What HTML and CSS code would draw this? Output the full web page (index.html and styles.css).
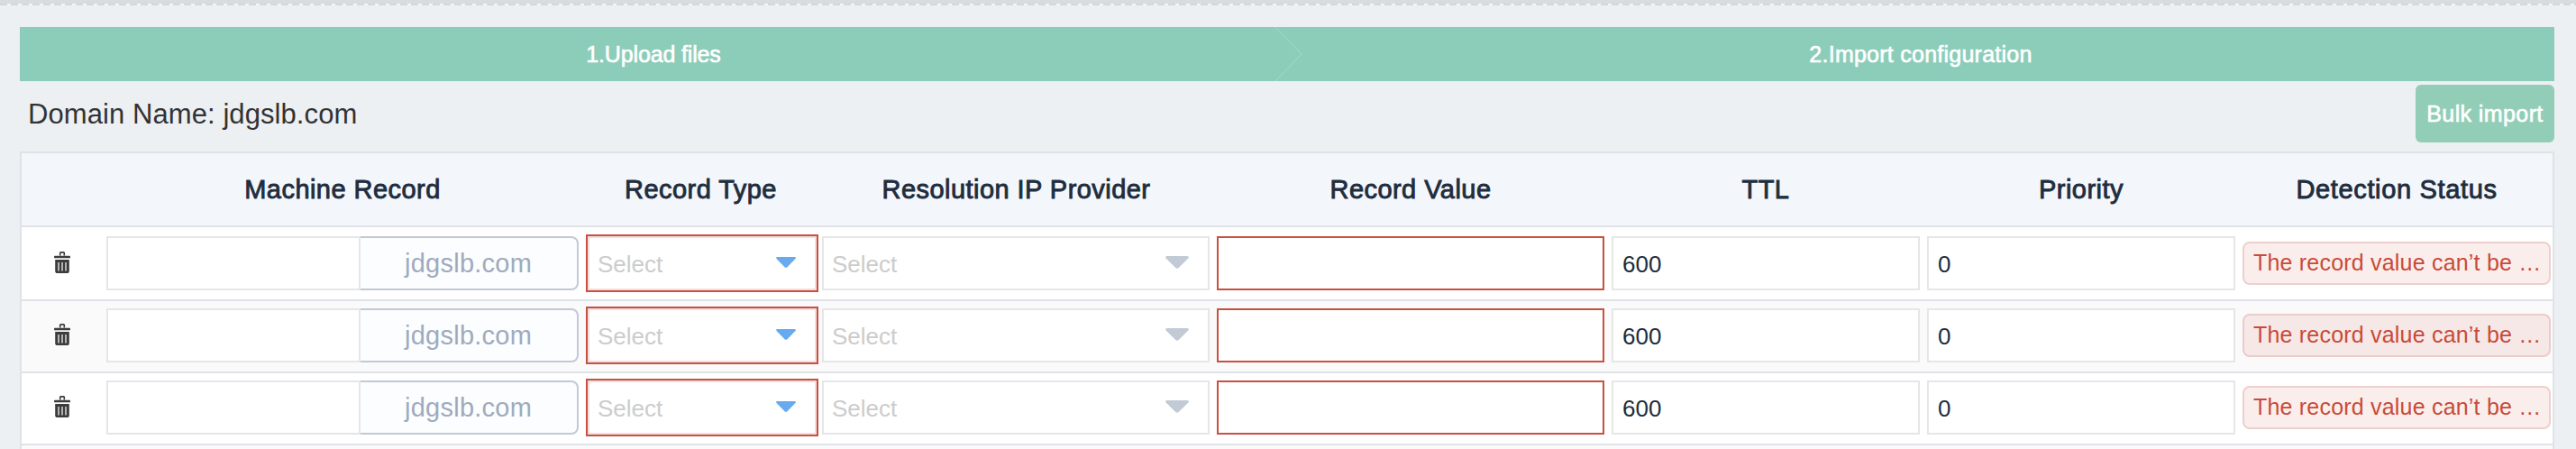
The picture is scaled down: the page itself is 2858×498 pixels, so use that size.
FILE: index.html
```
<!DOCTYPE html>
<html lang="en">
<head>
<meta charset="utf-8">
<title>Import configuration</title>
<link rel="stylesheet" href="styles.css">
</head>
<body>
<svg class="sprite" width="0" height="0" aria-hidden="true">
  <symbol id="trash" viewBox="0 0 18 24">
    <path d="M6.7 4.5V1.6q0-.7.7-.7h3.2q.7 0 .7.7v2.9" fill="none" stroke="#3c3c3c" stroke-width="1.6"/>
    <rect x="0" y="4.7" width="18" height="2.6" rx=".9" fill="#3c3c3c"/>
    <path d="M1.2 9h15.6v12.4q0 2.6-2.6 2.6H3.8q-2.6 0-2.6-2.6z" fill="#3c3c3c"/>
    <path d="M5 12v9.5M9 12v9.5M13 12v9.5" stroke="#d9d9d9" stroke-width="1.5"/>
  </symbol>
  <symbol id="caret" viewBox="0 0 24 14" preserveAspectRatio="none">
    <path d="M1.6 0h20.8q2.4.4 1 2.4l-9.8 10.6q-1.6 1.6-3.2 0L.6 2.4Q-.8.4 1.6 0z" fill="currentColor"/>
  </symbol>
</svg>
<div class="strip"></div>
<main class="page">
  <div class="steps">
    <div class="step upload">1.Upload files</div>
    <div class="step config">2.Import configuration</div>
    <svg class="chevron" width="32" height="60" viewBox="0 0 32 60"><path d="M1 0L30 30L1 60" fill="none" stroke="#a3d8c7" stroke-width="1"/></svg>
  </div>
  <div class="bar">
    <div class="domain">Domain Name: jdgslb.com</div>
    <button class="bulk">Bulk import</button>
  </div>
  <section class="table">
    <div class="row head">
      <span></span><span>Machine Record</span><span>Record Type</span><span>Resolution IP Provider</span><span>Record Value</span><span>TTL</span><span>Priority</span><span class="detection">Detection Status</span>
    </div>
    <div class="row first">
      <svg class="trash"><use href="#trash"/></svg>
      <div class="machine"><span class="box"></span><span class="suffix">jdgslb.com</span></div>
      <div class="error"><div class="select">Select<svg class="caret blue"><use href="#caret"/></svg></div></div>
      <div class="select provider">Select<svg class="caret"><use href="#caret"/></svg></div>
      <div class="box invalid"></div>
      <div class="box">600</div>
      <div class="box">0</div>
      <div class="status">The record value can’t be …</div>
    </div>
    <div class="row even">
      <svg class="trash"><use href="#trash"/></svg>
      <div class="machine"><span class="box"></span><span class="suffix">jdgslb.com</span></div>
      <div class="error"><div class="select">Select<svg class="caret blue"><use href="#caret"/></svg></div></div>
      <div class="select provider">Select<svg class="caret"><use href="#caret"/></svg></div>
      <div class="box invalid"></div>
      <div class="box">600</div>
      <div class="box">0</div>
      <div class="status">The record value can’t be …</div>
    </div>
    <div class="row">
      <svg class="trash"><use href="#trash"/></svg>
      <div class="machine"><span class="box"></span><span class="suffix">jdgslb.com</span></div>
      <div class="error"><div class="select">Select<svg class="caret blue"><use href="#caret"/></svg></div></div>
      <div class="select provider">Select<svg class="caret"><use href="#caret"/></svg></div>
      <div class="box invalid"></div>
      <div class="box">600</div>
      <div class="box">0</div>
      <div class="status">The record value can’t be …</div>
    </div>
    <div class="rest"></div>
  </section>
</main>
</body>
</html>
```
FILE: styles.css
```
* { box-sizing: border-box; }
body {
  margin: 0;
  height: 498px;
  overflow: hidden;
  background: #ecf0f3;
  font-family: "Liberation Sans", Arial, sans-serif;
  color: #1f2d3d;
}
.sprite { display: none; }
.strip {
  height: 6px;
  background:
    repeating-linear-gradient(90deg, #d4d8de 0 8px, #f2f4fb 8px 12px) 0 4px / 100% 2px no-repeat,
    #d8dcdf;
}
.page { padding: 24px 24px 0 22px; }
.steps {
  position: relative;
  display: flex;
  height: 60px;
  background: #8ccdb9;
}
.step {
  flex: 1;
  text-align: center;
  font-size: 25px;
  line-height: 60px;
  color: #fff;
  -webkit-text-stroke: .6px #fff;
}
.upload { letter-spacing: -.15px; }
.config { letter-spacing: .25px; }
.chevron { position: absolute; left: 1392px; top: 0; }
.bar {
  display: flex;
  justify-content: space-between;
  height: 78px;
  padding: 4px 0 0 9px;
}
.domain {
  font-size: 31px;
  line-height: 65px;
  letter-spacing: .08px;
  color: #333;
}
.bulk {
  width: 154px;
  height: 64px;
  padding: 0;
  border: 0;
  border-radius: 6px;
  background: #92ceb7;
  font: 25px/60px "Liberation Sans", Arial, sans-serif;
  letter-spacing: .4px;
  color: #fff;
  -webkit-text-stroke: .6px #fff;
}
.table {
  height: 340px;
  border: 2px solid #dfe3e8;
  border-bottom: 0;
  background: #fff;
}
.row {
  display: grid;
  grid-template-columns: 90px 532px 263px 437px 438px 350px 350px 350px;
  align-items: center;
  height: 80px;
  padding-bottom: 2px;
  border-bottom: 2px solid #dfe3e8;
}
.head {
  height: 82px;
  padding: 0;
  background: #f3f7fc;
  font-size: 29px;
  letter-spacing: .45px;
  text-align: center;
  -webkit-text-stroke: .9px #1f2d3d;
}
.detection { letter-spacing: .65px; }
.first { height: 82px; padding-bottom: 0; }
.even, .rest { background: #fafafa; }
.rest { height: 6px; }
.trash { width: 18px; height: 24px; margin: 0 0 2px 36px; display: block; }
.box, .select {
  display: block;
  height: 60px;
  margin: 0 4px;
  padding-left: 10px;
  border: 2px solid #e6e6e6;
  background: #fff;
  font-size: 26px;
  line-height: 58px;
}
.invalid { border-color: #c94f40; }
.machine { display: flex; margin: 0 4px; }
.machine .box { width: 282px; margin: 0; }
.suffix {
  width: 242px;
  height: 60px;
  padding-left: 49px;
  border: 2px solid #c2c9d6;
  border-left: 0;
  border-radius: 0 8px 8px 0;
  background: #fbfdff;
  font-size: 29px;
  line-height: 57px;
  letter-spacing: .25px;
  color: #a0aabd;
}
.error {
  width: 258px;
  height: 64px;
  margin-left: 4px;
  border: 2px solid #c94f40;
}
.select {
  display: flex;
  justify-content: space-between;
  color: #ccc;
}
.error .select {
  margin: 0;
  padding: 0 21px 0 9px;
  border-color: #f2dfdd;
}
.provider { margin: 0 4px 0 3px; padding: 0 21px 0 9px; }
.caret { width: 26px; height: 14px; margin-top: 20px; color: #c2cad6; }
.blue { width: 22px; height: 12px; margin-top: 21px; color: #67aaf0; }
.status {
  height: 48px;
  margin: 0 4px;
  padding-left: 10px;
  border: 2px solid #efcfce;
  border-radius: 8px;
  background: #faeeec;
  font-size: 25px;
  line-height: 43px;
  letter-spacing: .2px;
  white-space: nowrap;
  color: #c94a38;
}
.even .status { background: #f6e8e7; border-color: #eccccb; }
```
